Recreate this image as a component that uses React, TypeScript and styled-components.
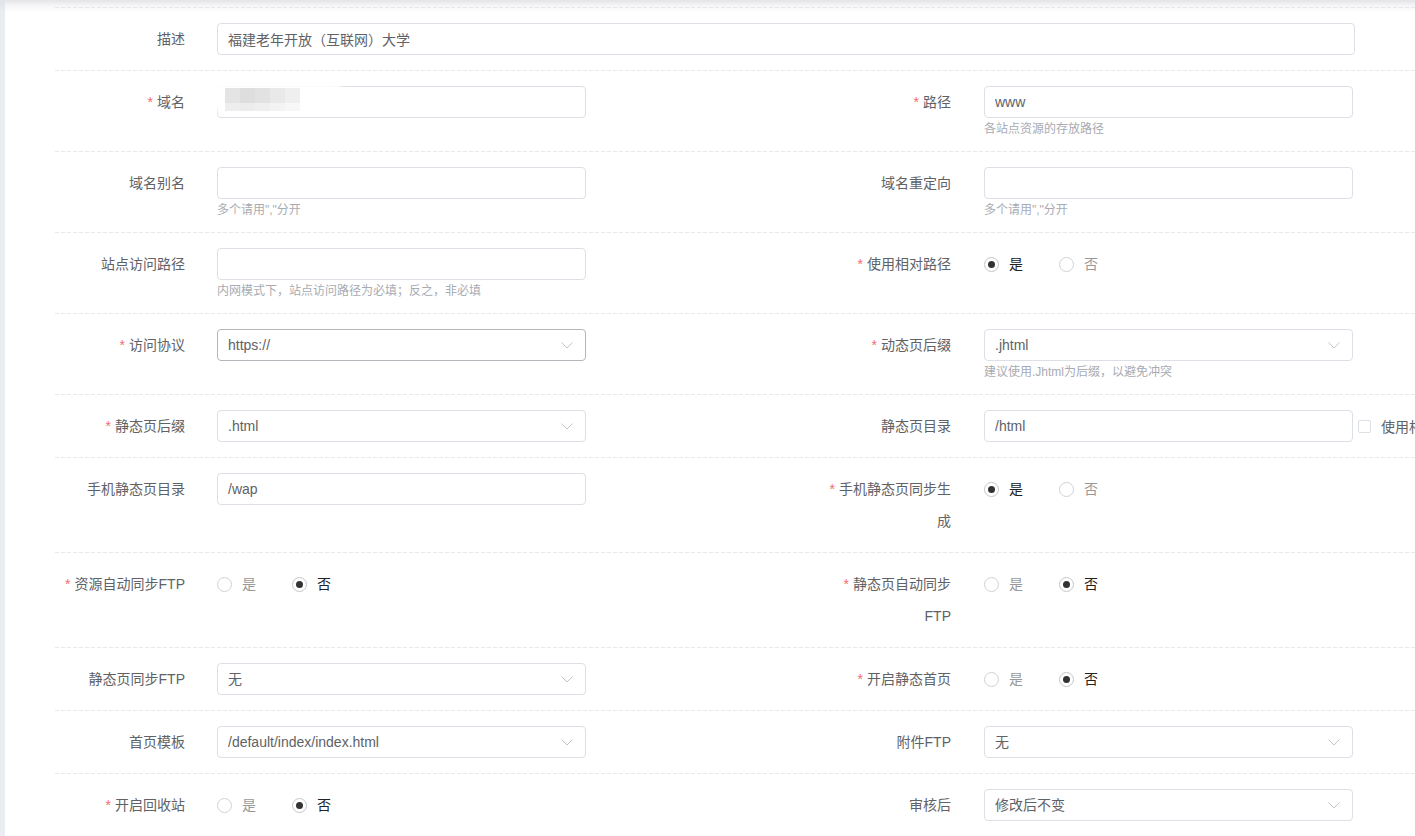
import React from "react";
import styled, { createGlobalStyle, css } from "styled-components";

const GlobalStyle = createGlobalStyle`
  html, body {
    margin: 0;
    padding: 0;
    background: #ffffff;
    overflow: hidden;
  }
  body {
    font-family: "Liberation Sans", "Noto Sans CJK SC", sans-serif;
    font-size: 14px;
    color: #606266;
  }
  * { box-sizing: border-box; }
`;

const Page = styled.div`
  display: flex;
  width: 1415px;
  height: 836px;
  overflow: hidden;
`;

const SideStrip = styled.div`
  flex: 0 0 5px;
  background: linear-gradient(to bottom, #dfe3ea 0, #e9ecf1 12px, #e9ecf1 100%);
`;

const Panel = styled.div`
  flex: 1;
  min-width: 0;
  padding: 7px 0 0 50px;
  background: linear-gradient(to bottom, #e4e4e8 0, #f4f4f6 5px, #ffffff 12px) no-repeat;
  overflow: hidden;
`;

const Form = styled.div`
  display: flex;
  flex-direction: column;
  width: 1532px;
`;

const Row = styled.div<{ $full?: boolean }>`
  display: grid;
  grid-template-columns: ${(p) => (p.$full ? "1fr" : "766px 766px")};
  padding: 16px 0 15px;
  background-image: linear-gradient(to right, #e6e8ec 4px, transparent 4px);
  background-size: 6px 1px;
  background-repeat: repeat-x;
  background-position: 0 0;
`;

const Item = styled.div`
  display: flex;
  align-items: flex-start;
`;

const Label = styled.div<{ $required?: boolean }>`
  flex: 0 0 162px;
  padding: 0 32px 0 4px;
  text-align: right;
  line-height: 32px;
  font-size: 14px;
  color: #606266;
  ${(p) =>
    p.$required &&
    css`
      &::before {
        content: "*";
        color: #f56c6c;
        margin-right: 4px;
      }
    `}
`;

const Control = styled.div<{ $w?: number; $shift?: number }>`
  position: relative;
  width: ${(p) => p.$w ?? 369}px;
  margin-left: ${(p) => p.$shift ?? 0}px;
  display: flex;
  flex-direction: column;
`;

const ControlLine = styled.div`
  display: flex;
  align-items: center;
`;

const TextInput = styled.input<{ $dark?: boolean }>`
  flex: 0 0 100%;
  width: 100%;
  height: 32px;
  padding: 0 10px;
  border: 1px solid ${(p) => (p.$dark ? "#b4b6bb" : "#dcdfe6")};
  border-radius: 4px;
  font: inherit;
  font-size: 14px;
  color: #606266;
  background: #fff;
  outline: none;
`;

const SelectBox = styled.div<{ $dark?: boolean }>`
  width: 100%;
  height: 32px;
  padding: 0 12px 0 10px;
  border: 1px solid ${(p) => (p.$dark ? "#b4b6bb" : "#dcdfe6")};
  border-radius: 4px;
  display: flex;
  align-items: center;
  justify-content: space-between;
  line-height: 30px;
  color: #606266;
  background: #fff;
`;

const Chevron = () => (
  <svg width="12" height="7" viewBox="0 0 12 7" fill="none">
    <path d="M0.5 0.5 L6 6 L11.5 0.5" stroke="#c0c4cc" strokeWidth="1" />
  </svg>
);

const Help = styled.div`
  padding-top: 4px;
  line-height: 14px;
  font-size: 12px;
  color: #a8abb2;
  white-space: nowrap;
`;

const RadioGroup = styled.div`
  display: flex;
  align-items: center;
  height: 32px;
`;

const RadioItem = styled.label`
  display: inline-flex;
  align-items: center;
  margin-right: 36px;
  cursor: pointer;
`;

const RadioCircle = styled.span<{ $checked?: boolean }>`
  width: 15px;
  height: 15px;
  border-radius: 50%;
  border: 1px solid ${(p) => (p.$checked ? "#c4c6cb" : "#cfd2d8")};
  background: #fff;
  display: inline-flex;
  align-items: center;
  justify-content: center;
  &::after {
    content: "";
    width: 7px;
    height: 7px;
    border-radius: 50%;
    background: #333;
    display: ${(p) => (p.$checked ? "block" : "none")};
  }
`;

const RadioText = styled.span<{ $checked?: boolean }>`
  padding-left: 10px;
  font-size: 14px;
  line-height: 32px;
  color: ${(p) => (p.$checked ? "#222" : "#999")};
`;

const CheckWrap = styled.label`
  flex: 0 0 auto;
  display: inline-flex;
  align-items: center;
  margin-left: 5px;
  white-space: nowrap;
  color: #606266;
`;

const CheckBox = styled.span`
  width: 13px;
  height: 13px;
  border: 1px solid #dcdfe6;
  border-radius: 2px;
  background: #fff;
  margin-right: 10px;
`;

const BlurOverlay = styled.div`
  position: absolute;
  left: -7px;
  top: -3px;
  width: 130px;
  height: 28px;
  pointer-events: none;
`;

const WhiteSmear = styled.div`
  position: absolute;
  inset: 0;
  background: #fff;
  filter: blur(3px);
`;

const Mosaic = styled.div`
  position: absolute;
  left: 15px;
  top: 5px;
  display: grid;
  grid-template-columns: repeat(5, 15px);
  grid-template-rows: 15px 8px;
  filter: blur(0.6px);
`;

const Tile = styled.span<{ $c: string }>`
  background: ${(p) => p.$c};
`;

const tiles = [
  "#e4e4e4", "#dedede", "#e2e2e2", "#e9e9e9", "#efefef",
  "#eeeeee", "#ececec", "#efefef", "#f3f3f3", "#f7f7f7",
];

type Field =
  | { kind: "input"; value?: string; dark?: boolean; help?: string; blurred?: boolean; check?: string }
  | { kind: "select"; value: string; dark?: boolean; help?: string }
  | { kind: "radio"; checked: 0 | 1 };

type Cell = { label: string; required?: boolean; field: Field; width?: number };

const Radio = ({ checked }: { checked: 0 | 1 }) => (
  <RadioGroup>
    {["是", "否"].map((t, i) => (
      <RadioItem key={t}>
        <RadioCircle $checked={checked === i} />
        <RadioText $checked={checked === i}>{t}</RadioText>
      </RadioItem>
    ))}
  </RadioGroup>
);

const FieldView = ({ field }: { field: Field }) => {
  if (field.kind === "radio") return <Radio checked={field.checked} />;
  if (field.kind === "select")
    return (
      <>
        <SelectBox $dark={field.dark}>
          <span>{field.value}</span>
          <Chevron />
        </SelectBox>
        {field.help && <Help>{field.help}</Help>}
      </>
    );
  return (
    <>
      <ControlLine>
        <TextInput readOnly value={field.value ?? ""} $dark={field.dark} />
        {field.check && (
          <CheckWrap>
            <CheckBox />
            {field.check}
          </CheckWrap>
        )}
      </ControlLine>
      {field.blurred && (
        <BlurOverlay>
          <WhiteSmear />
          <Mosaic>
            {tiles.map((c, i) => (
              <Tile key={i} $c={c} />
            ))}
          </Mosaic>
        </BlurOverlay>
      )}
      {field.help && <Help>{field.help}</Help>}
    </>
  );
};

const CellView = ({ cell, right }: { cell: Cell; right?: boolean }) => (
  <Item>
    <Label $required={cell.required}>{cell.label}</Label>
    <Control $w={cell.width} $shift={right ? 1 : 0}>
      <FieldView field={cell.field} />
    </Control>
  </Item>
);

const rows: Cell[][] = [
  [
    { label: "域名", required: true, field: { kind: "input", blurred: true } },
    { label: "路径", required: true, field: { kind: "input", value: "www", help: "各站点资源的存放路径" } },
  ],
  [
    { label: "域名别名", field: { kind: "input", help: '多个请用","分开' } },
    { label: "域名重定向", field: { kind: "input", help: '多个请用","分开' } },
  ],
  [
    { label: "站点访问路径", field: { kind: "input", help: "内网模式下，站点访问路径为必填；反之，非必填" } },
    { label: "使用相对路径", required: true, field: { kind: "radio", checked: 0 } },
  ],
  [
    { label: "访问协议", required: true, field: { kind: "select", value: "https://", dark: true } },
    { label: "动态页后缀", required: true, field: { kind: "select", value: ".jhtml", help: "建议使用.Jhtml为后缀，以避免冲突" } },
  ],
  [
    { label: "静态页后缀", required: true, field: { kind: "select", value: ".html" } },
    { label: "静态页目录", field: { kind: "input", value: "/html", check: "使用相对路径" } },
  ],
  [
    { label: "手机静态页目录", field: { kind: "input", value: "/wap" } },
    { label: "手机静态页同步生成", required: true, field: { kind: "radio", checked: 0 } },
  ],
  [
    { label: "资源自动同步FTP", required: true, field: { kind: "radio", checked: 1 } },
    { label: "静态页自动同步FTP", required: true, field: { kind: "radio", checked: 1 } },
  ],
  [
    { label: "静态页同步FTP", field: { kind: "select", value: "无" } },
    { label: "开启静态首页", required: true, field: { kind: "radio", checked: 1 } },
  ],
  [
    { label: "首页模板", field: { kind: "select", value: "/default/index/index.html" } },
    { label: "附件FTP", field: { kind: "select", value: "无" } },
  ],
  [
    { label: "开启回收站", required: true, field: { kind: "radio", checked: 1 } },
    { label: "审核后", field: { kind: "select", value: "修改后不变" } },
  ],
];

export default function App() {
  return (
    <>
      <GlobalStyle />
      <Page>
        <SideStrip />
        <Panel>
          <Form>
            <Row $full>
              <CellView
                cell={{ label: "描述", width: 1138, field: { kind: "input", value: "福建老年开放（互联网）大学" } }}
              />
            </Row>
            {rows.map((r, i) => (
              <Row key={i}>
                {r.map((c, j) => (
                  <CellView key={c.label} cell={c} right={j === 1} />
                ))}
              </Row>
            ))}
          </Form>
        </Panel>
      </Page>
    </>
  );
}
